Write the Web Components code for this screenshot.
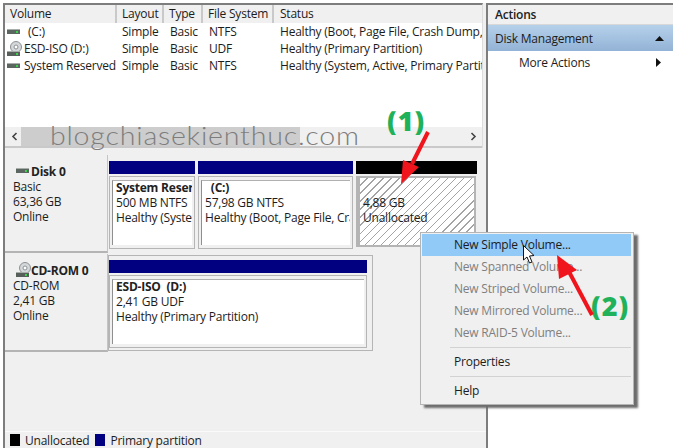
<!DOCTYPE html>
<html><head><meta charset="utf-8">
<style>
html,body{margin:0;padding:0;background:#fff;}
body{width:673px;height:448px;overflow:hidden;font:12px "Open Sans","Noto Sans",sans-serif;letter-spacing:-.22px;color:#1c1c1c;position:relative;}
</style></head><body>
<dm-app></dm-app>
<script>
const DISK=`<svg width="16" height="8" viewBox="0 0 16 8"><rect x="0" y="1" width="13" height="5" fill="#5c6660"/><rect x="0" y="1" width="13" height="1" fill="#a8aeaa"/><rect x="9" y="3" width="2" height="2" fill="#39d24a"/></svg>`;
const CD=`<svg width="16" height="16" viewBox="0 0 16 16"><circle cx="9" cy="6" r="5.500" fill="#d5d8da" stroke="#8d9193" stroke-width="1"/><circle cx="9" cy="6" r="2" fill="#fff" stroke="#8d9193"/><rect x="0" y="10" width="13" height="5" fill="#565f5a"/><rect x="0" y="10" width="13" height="1" fill="#a8aeaa"/><rect x="9" y="12" width="2" height="2" fill="#39d24a"/></svg>`;
const COLS='112px 47px 39px 71px 1fr';
function def(name,css,html){
  customElements.define(name,class extends HTMLElement{
    constructor(){super();const r=this.attachShadow({mode:'open'});r.innerHTML=`<style>${css}</style>`+(typeof html==='function'?html(this):html);}
  });
}
def('vol-row',`:host{display:grid;grid-template-columns:${COLS};height:17px;line-height:17px;white-space:nowrap;overflow:hidden}
 .n{display:flex;align-items:center;padding-left:2px;gap:1px;overflow:hidden}.n svg{flex:none}
 .c{padding-left:6px;overflow:hidden}`,
 e=>`<div class="n">${e.getAttribute('icon')==='cd'?CD:DISK}<span style="margin-left:${e.getAttribute('ind')||0}px">${e.getAttribute('n')}</span></div><div class="c" style="padding-left:5px">Simple</div><div class="c">Basic</div><div class="c">${e.getAttribute('fs')}</div><div class="c">${e.getAttribute('st')}</div>`);
def('vol-list',`:host{display:flex;flex-direction:column;height:145px;width:480px;background:#fff;border-top:2px solid #7d7d7d;border-left:2px solid #7d7d7d;border-right:1px solid #ddd;box-sizing:border-box}
 .h{display:grid;grid-template-columns:${COLS};height:18px;line-height:18px;background:#f0f0f0;flex:none}
 .h div{padding-left:5px;border-right:2px solid #c9c9c9;white-space:nowrap}.h div:last-child{border-right:0;padding-left:6px}
 .b{flex:1;min-height:0}
 .s{height:19px;background:#f0f0f0;display:flex;align-items:center;border-bottom:2px solid #c9c9c9;flex:none}
 .th{width:279px;height:19px;background:#cdcdcd;margin-left:10px}
 svg{flex:none}.r{margin-left:auto;margin-right:5px}`,
 `<div class="h"><div>Volume</div><div>Layout</div><div>Type</div><div>File System</div><div>Status</div></div>
 <div class="b"><slot></slot></div>
 <div class="s"><svg width="7" height="9" viewBox="0 0 7 9" style="margin-right:-7px;margin-left:6px"><path d="M5.500 1L2 4.500 5.500 8" fill="none" stroke="#444" stroke-width="1.6"/></svg><div class="th"></div><svg class="r" width="7" height="9" viewBox="0 0 7 9"><path d="M1.500 1L5 4.500 1.500 8" fill="none" stroke="#444" stroke-width="1.6"/></svg></div>`);
def('disk-label',`:host{display:block;width:103px;box-sizing:border-box;padding:8px 0 0 8px;line-height:15px;background:#f0f0f0;border-bottom:2px solid #b4b4b4;border-right:1px solid #c4c4c4}
 .t{display:flex;align-items:center;font-weight:700;height:16px;color:#222}.t svg{flex:none;margin:0 -1px 0 3px}`,
 e=>`<div class="t">${e.getAttribute('icon')==='cd'?CD:DISK}<span>${e.getAttribute('t')}</span></div><slot></slot>`);
def('part-block',`:host{display:flex;flex-direction:column;box-sizing:border-box;gap:2px}
 .bar{height:13px;flex:none}
 .box{flex:1;box-sizing:border-box;border:1px solid #b5b5b5;padding:3px 2px 3px 2px;background:#f0f0f0;display:flex;min-height:0}
 .in{flex:1;background:#fff;border-left:1px solid #8f8f8f;border-top:1px solid #b0b0b0;padding:0 0 0 3px;line-height:15px;white-space:nowrap;overflow:hidden;box-sizing:border-box;min-width:0}
 .tx{margin-top:-1px}
 ::slotted(b){color:#222;display:block;height:15px}
 :host([hatch]) .box{padding:2px 2px 2px 4px;margin:0 1px 2px 0;background:#b4b4b4;border:0}
 :host([hatch]) .in{border:0;padding:17px 0 0 3px;background:repeating-linear-gradient(135deg,#fff 0 4.700px,#a4a4a4 4.700px 5.700px)}
 :host([hatch]) .tx{margin-top:0}`,
 e=>`<div class="bar" style="background:${e.getAttribute('c')}"></div><div class="box"><div class="in"><div class="tx"><slot></slot></div></div></div>`);
def('disk-row',`:host{display:flex;height:98px;box-sizing:border-box}
 .p{display:flex;gap:3px;padding:6px 0 4px 1px;box-sizing:border-box;flex:1;min-width:0}
 :host([framed]) .p{flex:none;width:265px;margin:1px 0 1px 0;padding:4px 0 2px 0;border:1px solid #b5b5b5}
 ::slotted(disk-label){flex:none}`,
 `<slot name="l"></slot><div class="p"><slot></slot></div>`);
def('legend-bar',`:host{display:flex;align-items:center;height:17px;background:#f0f0f0;border-top:1px solid #fafafa;padding-left:5px;box-sizing:border-box;white-space:nowrap}
 i{display:block;width:10px;height:12px;margin-right:5px}`,
 `<i style="background:#000"></i><span style="margin-right:6px">Unallocated</span><i style="background:#000080"></i><span>Primary partition</span>`);
def('left-pane',`:host{display:flex;flex-direction:column;width:483px;height:445px;background:#f0f0f0;flex:none}
 .sp{height:7px;flex:none}.d{flex:1;border-left:2px solid #7d7d7d;display:flex;flex-direction:column;min-height:0}
 .g{flex:1}`,
 `<slot name="list"></slot><div class="d"><div class="sp"></div><slot name="disks"></slot><div class="g"></div><slot name="legend"></slot></div>`);
def('actions-pane',`:host{display:block;flex:1;border-left:2px solid #7d7d7d;border-top:2px solid #7d7d7d;background:#fff;height:445px;box-sizing:border-box}
 .a{height:20px;line-height:19px;padding-left:7px;font-weight:600;background:#f0f0f0;border-bottom:1px solid #d8d8d8;color:#222;box-sizing:border-box}
 .r{display:flex;align-items:center;justify-content:space-between;box-sizing:border-box}
 .m{height:26px;padding:1px 7px 0;background:linear-gradient(#b5d0ea,#93b3d6)}
 .x{height:24px;padding:0 7px 2px 31px}
 svg{flex:none}`,
 `<div class="a">Actions</div>
  <div class="r m"><span>Disk Management</span><svg width="9" height="5" viewBox="0 0 9 5" style="margin-right:2px"><path d="M4.500 0L9 5H0z" fill="#111"/></svg></div>
  <div class="r x"><span>More Actions</span><svg width="5" height="9" viewBox="0 0 5 9" style="margin-right:5px"><path d="M0 0L5 4.500 0 9z" fill="#111"/></svg></div>`);
def('menu-item',`:host{display:block;height:22px;line-height:22px;padding-left:32px;color:#1c1c1c;white-space:nowrap}
 :host([off]){color:#7f7f7f}:host([on]){background:#91c9f7}`,`<slot></slot>`);
def('ctx-menu',`:host{position:absolute;left:420px;top:232px;width:214px;height:173px;box-sizing:border-box;background:#f0f0f0;border:1px solid #b5b5b5;padding:1px 2px 1px 1px;box-shadow:4px 3px 2px #6d6d6d}`,
 `<slot></slot>`);
def('menu-sep',`:host{display:block;height:1px;background:#d2d2d2;margin:3px 0 3px 28px}`,``);
def('over-lay',`:host{position:absolute;left:0;top:0;width:673px;height:448px;pointer-events:none}
 .w{position:absolute;left:50px;top:119px;font:300 26px "Lato","Open Sans",sans-serif;color:#7d7d7d;white-space:nowrap;letter-spacing:.7px;transform:scaleX(1.1);transform-origin:0 50%}
 .g{position:absolute;font:800 27px "Open Sans",sans-serif;color:#1fb25a;line-height:30px;white-space:nowrap;letter-spacing:1px}
 svg{position:absolute;left:0;top:0}`,
 `<div class="w">blogchiasekienthuc.com</div>
  <div class="g" style="left:387px;top:106px">(1)</div>
  <div class="g" style="left:591px;top:291px">(2)</div>
  <svg width="673" height="448" viewBox="0 0 673 448">
   <path d="M428 132L412 164" stroke="#f0141c" stroke-width="4" fill="none"/>
   <path d="M401 184L403 160L419 167z" fill="#f0141c"/>
   <path d="M592 315L567 268" stroke="#f0141c" stroke-width="4" fill="none"/>
   <path d="M557 255L559 279L577 270z" fill="#f0141c"/>
   <path d="M523.500 245.500V260L527 257L529.500 263L532 262L529.500 256L534 255.500z" fill="#fff" stroke="#111" stroke-width="1"/>
  </svg>`);
def('dm-app',`:host{display:flex;padding:3px 0 0 3px;width:673px;height:448px;box-sizing:border-box}`,
 `<left-pane>
   <vol-list slot="list">
    <vol-row n="(C:)" ind="4" fs="NTFS" st="Healthy (Boot, Page File, Crash Dump, Primary Partition)"></vol-row>
    <vol-row icon="cd" n="ESD-ISO (D:)" fs="UDF" st="Healthy (Primary Partition)"></vol-row>
    <vol-row n="System Reserved" fs="NTFS" st="Healthy (System, Active, Primary Partition)"></vol-row>
   </vol-list>
   <disk-row slot="disks">
    <disk-label slot="l" t="Disk 0">Basic<br>63,36 GB<br>Online</disk-label>
    <part-block c="#000080" style="width:86px"><b>System Reserved</b>500 MB NTFS<br>Healthy (System, Active, Primary Partition)</part-block>
    <part-block c="#000080" style="width:155px"><b>&nbsp; (C:)</b>57,98 GB NTFS<br>Healthy (Boot, Page File, Crash Dump, Primary Partition)</part-block>
    <part-block hatch c="#000" style="width:121px">4,88 GB<br>Unallocated</part-block>
   </disk-row>
   <disk-row slot="disks" framed style="margin-top:1px">
    <disk-label slot="l" icon="cd" t="CD-ROM 0">CD-ROM<br>2,41 GB<br>Online</disk-label>
    <part-block c="#000080" style="width:258px"><b>ESD-ISO &nbsp;(D:)</b>2,41 GB UDF<br>Healthy (Primary Partition)</part-block>
   </disk-row>
   <legend-bar slot="legend"></legend-bar>
  </left-pane>
  <actions-pane></actions-pane>
  <ctx-menu>
   <menu-item on>New Simple Volume...</menu-item>
   <menu-item off>New Spanned Volume...</menu-item>
   <menu-item off>New Striped Volume...</menu-item>
   <menu-item off>New Mirrored Volume...</menu-item>
   <menu-item off>New RAID-5 Volume...</menu-item>
   <menu-sep></menu-sep>
   <menu-item>Properties</menu-item>
   <menu-sep></menu-sep>
   <menu-item>Help</menu-item>
  </ctx-menu>
  <over-lay></over-lay>`);
</script>
</body></html>
